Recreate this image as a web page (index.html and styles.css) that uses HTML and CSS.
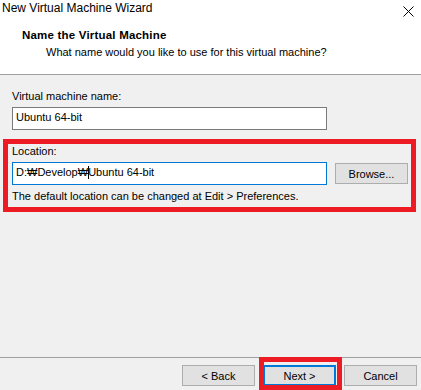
FILE: index.html
```html
<!DOCTYPE html>
<html lang="en">
<head>
    <meta charset="UTF-8">
    <meta name="viewport" content="width=device-width, initial-scale=1.0">
    <title>New Virtual Machine Wizard</title>
    <link rel="stylesheet" href="styles.css">
</head>
<body>
    <div class="top">
        <div class="titlebar">
            <span class="title">New Virtual Machine Wizard</span>
            <svg class="close" width="11" height="11" viewBox="0 0 11 11"><path d="M0.5 0.5 L10.5 10.5 M10.5 0.5 L0.5 10.5" stroke="#000" stroke-width="1" fill="none"/></svg>
        </div>
        <div class="header">
            <div class="heading">Name the Virtual Machine</div>
            <div class="subheading">What name would you like to use for this virtual machine?</div>
        </div>
    </div>

    <div class="content">
        <div class="field">
            <div class="label">Virtual machine name:</div>
            <div class="textbox">Ubuntu 64-bit</div>
        </div>

        <div class="location-box">
            <div class="label">Location:</div>
            <div class="row">
                <div class="textbox focused">D:₩Develop₩<span class="caret"></span>Ubuntu 64-bit</div>
                <button class="btn">Browse...</button>
            </div>
            <div class="hint">The default location can be changed at Edit &gt; Preferences.</div>
        </div>
    </div>

    <div class="footer">
        <button class="btn">&lt; Back</button>
        <button class="btn default">Next &gt;</button>
        <button class="btn">Cancel</button>
    </div>
</body>
</html>
```

FILE: styles.css
```css
body {
    margin: 0;
    height: 390px;
    display: flex;
    flex-direction: column;
    overflow: hidden;
    background-color: #f0f0f0;
    font-family: "Liberation Sans", Arial, sans-serif;
    font-size: 11px;
    color: #000;
}

.top {
    background-color: #fff;
    border-bottom: 1px solid #a0a0a0;
}

.titlebar {
    height: 29px;
    box-sizing: border-box;
    display: flex;
    justify-content: space-between;
    align-items: flex-start;
    padding: 1px 7px 0 2px;
}

.title {
    font-size: 12px;
    line-height: 15px;
}

.close {
    margin-top: 5px;
    display: block;
}

.header {
    padding: 0 0 15px 22px;
}

.heading {
    font-weight: bold;
    font-size: 11.5px;
    letter-spacing: 0.2px;
    line-height: 13px;
}

.subheading {
    margin-top: 4px;
    padding-left: 24px;
    line-height: 13px;
}

.content {
    flex: 1;
    padding: 15px 5px 0 3px;
}

.field {
    padding-left: 9px;
}

.label,
.hint {
    line-height: 13px;
}

.textbox {
    margin-top: 4px;
    width: 315px;
    height: 23px;
    box-sizing: border-box;
    border: 1px solid #7a7a7a;
    background-color: #fff;
    padding: 0 3px;
    line-height: 19px;
    white-space: nowrap;
}

.textbox.focused {
    margin-top: 0;
    border-color: #0078d7;
}

.caret {
    display: inline-block;
    width: 1px;
    height: 13px;
    background-color: #000;
    vertical-align: -3px;
    margin-right: -1px;
}

.location-box {
    margin-top: 9px;
    border: 5px solid #ed1c24;
    padding: 1px 3px 4px 4px;
}

.row {
    margin-top: 4px;
    display: flex;
    align-items: center;
    gap: 8px;
}

.hint {
    margin-top: 5px;
}

.btn {
    width: 73px;
    height: 21px;
    box-sizing: border-box;
    border: 1px solid #adadad;
    background-color: #e1e1e1;
    font-family: "Liberation Sans", Arial, sans-serif;
    font-size: 11px;
    color: #000;
    padding: 0;
    margin: 0;
}

.footer {
    height: 33px;
    box-sizing: border-box;
    border-top: 1px solid #a0a0a0;
    display: flex;
    justify-content: flex-end;
    align-items: flex-start;
    gap: 8px;
    padding: 7px 4px 0 0;
}

.btn.default {
    position: relative;
    border: 2px solid #0078d7;
}

/* red highlight drawn over the Next button */
.btn.default::after {
    content: "";
    position: absolute;
    top: -10px;
    left: -6px;
    right: -8px;
    bottom: -6px;
    border: 5px solid #ed1c24;
}
```
